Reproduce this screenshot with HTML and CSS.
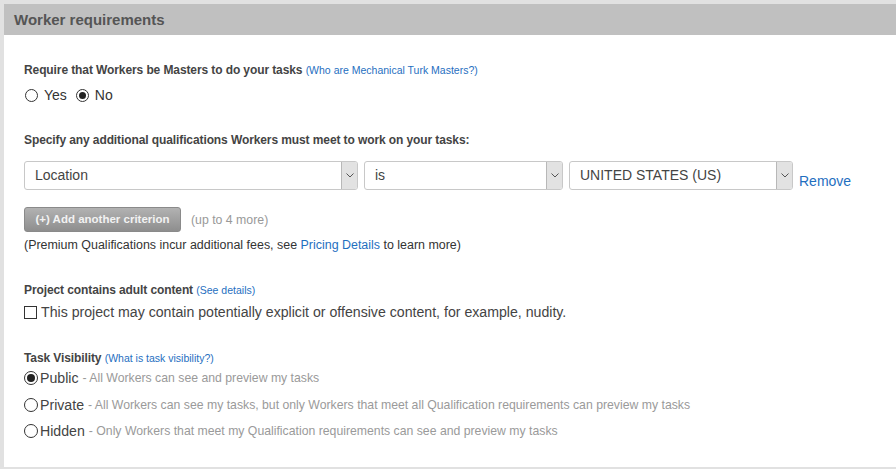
FILE: index.html
```html
<!DOCTYPE html>
<html>
<head>
<meta charset="utf-8">
<link rel="stylesheet" href="styles.css">
</head>
<body>
<div class="panel">
  <div class="panel-head">Worker requirements</div>
  <div class="panel-body">
    <div class="label">Require that Workers be Masters to do your tasks <a class="small-link" href="#">(Who are Mechanical Turk Masters?)</a></div>
    <div class="radio-row">
      <span class="opt"><span class="radio sm"></span>Yes</span>
      <span class="opt"><span class="radio sm on"></span>No</span>
    </div>

    <div class="label spec">Specify any additional qualifications Workers must meet to work on your tasks:</div>
    <div class="criteria">
      <div class="select s1"><span class="val">Location</span><span class="arrow"><svg width="8" height="5" viewBox="0 0 8 5"><path d="M0.5 0.5 L4 4 L7.5 0.5" fill="none" stroke="#555" stroke-width="1"/></svg></span></div>
      <div class="select s2"><span class="val">is</span><span class="arrow"><svg width="8" height="5" viewBox="0 0 8 5"><path d="M0.5 0.5 L4 4 L7.5 0.5" fill="none" stroke="#555" stroke-width="1"/></svg></span></div>
      <div class="select s3"><span class="val">UNITED STATES (US)</span><span class="arrow"><svg width="8" height="5" viewBox="0 0 8 5"><path d="M0.5 0.5 L4 4 L7.5 0.5" fill="none" stroke="#555" stroke-width="1"/></svg></span></div>
      <a class="remove" href="#">Remove</a>
    </div>
    <div class="add-row">
      <span class="btn">(+) Add another criterion</span>
      <span class="muted">(up to 4 more)</span>
    </div>
    <div class="note">(Premium Qualifications incur additional fees, see <a href="#">Pricing Details</a> to learn more)</div>

    <div class="label adult">Project contains adult content <a class="small-link" href="#">(See details)</a></div>
    <div class="check-row"><span class="checkbox"></span>This project may contain potentially explicit or offensive content, for example, nudity.</div>

    <div class="label vis">Task Visibility <a class="small-link" href="#">(What is task visibility?)</a></div>
    <div class="vis-list">
      <div class="vis-row"><span class="radio lg on"></span><span class="vname">Public</span><span class="vdesc">- All Workers can see and preview my tasks</span></div>
      <div class="vis-row"><span class="radio lg"></span><span class="vname">Private</span><span class="vdesc">- All Workers can see my tasks, but only Workers that meet all Qualification requirements can preview my tasks</span></div>
      <div class="vis-row"><span class="radio lg"></span><span class="vname">Hidden</span><span class="vdesc">- Only Workers that meet my Qualification requirements can see and preview my tasks</span></div>
    </div>
  </div>
</div>
</body>
</html>
```

FILE: styles.css
```css
html, body {
  margin: 0;
  padding: 0;
  background: #e1e1e1;
  font-family: "Liberation Sans", Arial, sans-serif;
  color: #333;
}
body {
  padding: 4px 0 3px 4px;
}
.panel {
  background: #fff;
}
.panel-head {
  background: #c0c0c0;
  height: 31px;
  line-height: 31px;
  padding-left: 10px;
  font-size: 15px;
  font-weight: bold;
  color: #555;
}
.panel-body {
  padding: 27px 0 26px 20px;
}
a {
  color: #1f6fbf;
  text-decoration: none;
}
.label {
  font-size: 12px;
  font-weight: bold;
  line-height: 16px;
  color: #444;
  letter-spacing: -0.1px;
}
.small-link {
  font-size: 10.5px;
  font-weight: normal;
  letter-spacing: 0;
}
.radio-row {
  margin-top: 7px;
  height: 20px;
  line-height: 20px;
  font-size: 14px;
  display: flex;
  gap: 8px;
}
.opt {
  display: flex;
  align-items: center;
}
.radio {
  display: inline-block;
  box-sizing: border-box;
  border: 1px solid #333;
  border-radius: 50%;
  position: relative;
  flex: none;
}
.radio.sm {
  width: 13px;
  height: 13px;
  margin: 0 6px 0 1px;
}
.radio.lg {
  width: 14px;
  height: 14px;
  margin-right: 2px;
}
.radio.on::after {
  content: "";
  position: absolute;
  left: 2px;
  top: 2px;
  right: 2px;
  bottom: 2px;
  border-radius: 50%;
  background: #222;
}
.spec {
  margin-top: 27px;
}
.criteria {
  margin-top: 13px;
  display: flex;
  gap: 6px;
  height: 29px;
}
.select {
  box-sizing: border-box;
  height: 29px;
  border: 1px solid #c8c8c8;
  border-radius: 3px;
  display: flex;
  align-items: stretch;
  font-size: 14px;
  color: #444;
  overflow: hidden;
}
.select .val {
  flex: 1;
  line-height: 27px;
  padding-left: 10px;
}
.select .arrow {
  width: 15px;
  background: #e2e2e2;
  border-left: 1px solid #b8b8b8;
  display: flex;
  align-items: center;
  justify-content: center;
}
.s1 { width: 334px; }
.s2 { width: 199px; }
.s3 { width: 224px; }
.remove {
  font-size: 14px;
  line-height: 16px;
  align-self: flex-end;
  padding-bottom: 1px;
}
.add-row {
  margin-top: 17px;
  display: flex;
  align-items: center;
  gap: 10px;
  height: 25px;
}
.btn {
  box-sizing: border-box;
  height: 25px;
  width: 157px;
  line-height: 23px;
  text-align: center;
  border: 1px solid #8a8a8a;
  border-radius: 3px;
  background: linear-gradient(#b2b2b2, #8e8e8e);
  color: #f2f2f2;
  font-size: 11.5px;
  font-weight: bold;
}
.muted {
  font-size: 12.3px;
  color: #999;
}
.note {
  margin-top: 5px;
  font-size: 12.45px;
  line-height: 16px;
  color: #333;
}
.adult {
  margin-top: 29px;
}
.check-row {
  margin-top: 4px;
  height: 20px;
  display: flex;
  align-items: center;
  font-size: 14.15px;
  color: #444;
}
.checkbox {
  box-sizing: border-box;
  width: 13px;
  height: 13px;
  border: 1px solid #333;
  margin-right: 4px;
  flex: none;
}
.vis {
  margin-top: 28px;
}
.vis-list {
  margin-top: 2px;
  display: flex;
  flex-direction: column;
  gap: 6.5px;
}
.vis-row {
  height: 20px;
  display: flex;
  align-items: center;
}
.vname {
  font-size: 14.15px;
  color: #444;
  margin-right: 4px;
}
.vdesc {
  font-size: 12.25px;
  color: #9a9a9a;
}
```
